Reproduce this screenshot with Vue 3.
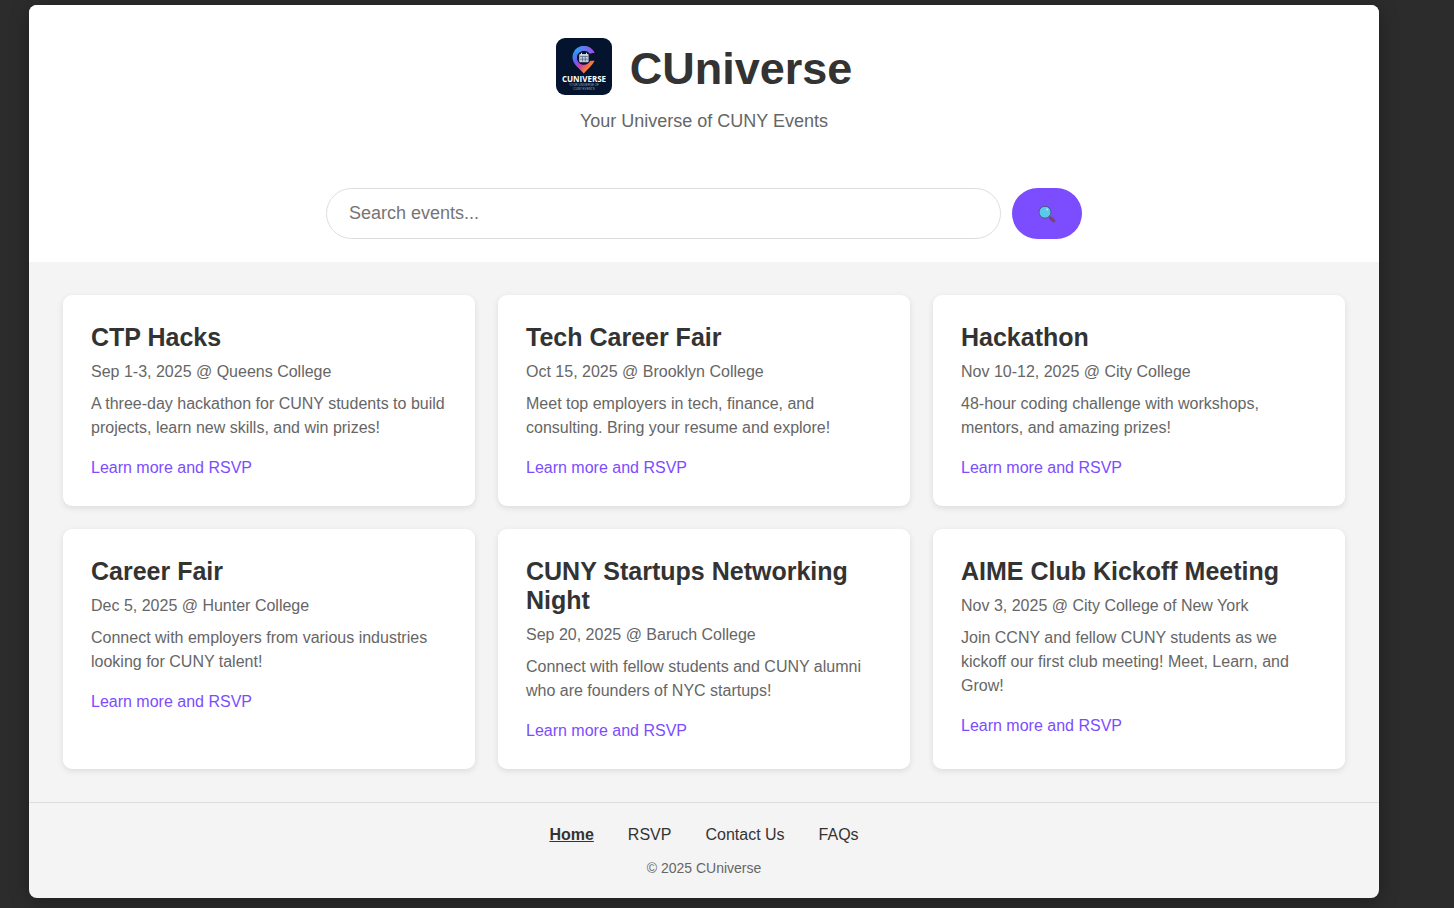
<template>
  <div class="page">
    <header class="header">
      <div class="brand">
        <svg class="logo" viewBox="0 0 56 57" role="img" aria-label="CUniverse logo">
          <defs>
            <linearGradient id="pin-fill" x1="0.1" y1="0.1" x2="0.8" y2="0.9">
              <stop offset="0" stop-color="#1fa4f5" />
              <stop offset="0.35" stop-color="#6a5cf0" />
              <stop offset="0.6" stop-color="#c93fae" />
              <stop offset="0.85" stop-color="#ff7a2e" />
            </linearGradient>
            <linearGradient id="pin-top" x1="0" y1="0" x2="1" y2="0">
              <stop offset="0" stop-color="#25a5f7" />
              <stop offset="1" stop-color="#a24be0" />
            </linearGradient>
          </defs>
          <rect width="56" height="57" fill="#04142f" />
          <path
            d="M38.5 14.5 C36 10.5 32.5 8 28 8 C21.5 8 16.5 13 16.5 19.5 C16.5 26 23 30 27.8 35.5 C31.5 31.2 36.5 27.5 38.7 22.8 L34.2 22.8 C32.9 25.3 30.7 26.8 28 26.8 C24 26.8 21 23.6 21 19.7 C21 15.8 24 12.7 28 12.7 C30.3 12.7 32.2 13.4 33.7 15.5 Z"
            fill="url(#pin-fill)"
          />
          <path
            d="M18.5 13 C20.5 9.8 24 8 28 8 C32.5 8 36.5 10.5 38.5 14.8 L33.7 15.5 C32.2 13.4 30.3 12.7 28 12.7 C25.5 12.7 23.5 13.7 22.2 15.5 Z"
            fill="url(#pin-top)"
          />
          <rect x="23.2" y="16" width="9.4" height="8.2" rx="1" fill="#c3cbd9" />
          <path d="M25.5 14.8 V17 M30.5 14.8 V17" stroke="#dfe5ef" stroke-width="1" />
          <path
            d="M24.2 18.5 H31.8 M24.2 21.2 H31.8 M26.5 18.5 V23.4 M29.3 18.5 V23.4"
            stroke="#53627c"
            stroke-width="0.7"
          />
          <text x="28" y="43.5" class="logo-name">CUNIVERSE</text>
          <text x="28" y="48.3" class="logo-tag">YOUR UNIVERSE OF</text>
          <text x="28" y="51.8" class="logo-tag">CUNY EVENTS</text>
        </svg>
        <h1>CUniverse</h1>
      </div>
      <p class="tagline">Your Universe of CUNY Events</p>

      <form class="search" @submit.prevent>
        <input v-model="query" type="text" placeholder="Search events..." aria-label="Search events" />
        <button type="submit" aria-label="Search">
          <svg viewBox="0 0 18 18" aria-hidden="true">
            <path d="M11 11 L12.8 13" stroke="#4b4a70" stroke-width="1.4" />
            <path d="M13 13.4 L15.6 15.8" stroke="#7d4470" stroke-width="3.6" stroke-linecap="round" />
            <circle cx="7" cy="7.2" r="6" fill="#5bc8ea" stroke="#4d5482" stroke-width="1" />
            <circle cx="9.2" cy="4.4" r="1" fill="#b9ecfa" />
          </svg>
        </button>
      </form>
    </header>

    <main class="events">
      <article v-for="event in filteredEvents" :key="event.title" class="card">
        <h2>{{ event.title }}</h2>
        <p class="meta">{{ event.date }} @ {{ event.location }}</p>
        <p class="description">{{ event.description }}</p>
        <a href="#rsvp">Learn more and RSVP</a>
      </article>
    </main>

    <footer class="footer">
      <nav>
        <a href="#home" class="active">Home</a>
        <a href="#rsvp">RSVP</a>
        <a href="#contact">Contact Us</a>
        <a href="#faqs">FAQs</a>
      </nav>
      <p>© 2025 CUniverse</p>
    </footer>
  </div>
</template>

<script setup>
import { ref, computed } from 'vue';

const query = ref('');

const events = [
  {
    title: 'CTP Hacks',
    date: 'Sep 1-3, 2025',
    location: 'Queens College',
    description: 'A three-day hackathon for CUNY students to build projects, learn new skills, and win prizes!'
  },
  {
    title: 'Tech Career Fair',
    date: 'Oct 15, 2025',
    location: 'Brooklyn College',
    description: 'Meet top employers in tech, finance, and consulting. Bring your resume and explore!'
  },
  {
    title: 'Hackathon',
    date: 'Nov 10-12, 2025',
    location: 'City College',
    description: '48-hour coding challenge with workshops, mentors, and amazing prizes!'
  },
  {
    title: 'Career Fair',
    date: 'Dec 5, 2025',
    location: 'Hunter College',
    description: 'Connect with employers from various industries looking for CUNY talent!'
  },
  {
    title: 'CUNY Startups Networking Night',
    date: 'Sep 20, 2025',
    location: 'Baruch College',
    description: 'Connect with fellow students and CUNY alumni who are founders of NYC startups!'
  },
  {
    title: 'AIME Club Kickoff Meeting',
    date: 'Nov 3, 2025',
    location: 'City College of New York',
    description: 'Join CCNY and fellow CUNY students as we kickoff our first club meeting! Meet, Learn, and Grow!'
  }
];

const filteredEvents = computed(() => {
  const term = query.value.trim().toLowerCase();
  return events.filter((event) => event.title.toLowerCase().includes(term));
});
</script>

<style>
body {
  background: #2c2c2c;
  padding: 5px 75px 10px 29px;
  font-family: Arial, 'Liberation Sans', sans-serif;
}
</style>

<style scoped>
.page {
  background: #f4f4f4;
  color: #333;
  border-radius: 8px;
  overflow: hidden;
  box-shadow: 0 4px 20px rgba(0, 0, 0, 0.3);
}

h1,
h2,
p {
  margin: 0;
}

/* Header */
.header {
  display: flex;
  flex-direction: column;
  align-items: center;
  padding: 33px 34px 23px;
  background: #fff;
}

.brand {
  display: flex;
  align-items: flex-start;
  gap: 18px;
}

.logo {
  width: 56px;
  height: 57px;
  border-radius: 9px;
}

.logo-name {
  fill: #fff;
  font-family: 'Open Sans', sans-serif;
  font-size: 8px;
  font-weight: 700;
  text-anchor: middle;
}

.logo-tag {
  fill: #9aa5b8;
  font-size: 3px;
  text-anchor: middle;
}

h1 {
  font-size: 45px;
  line-height: 61px;
}

.tagline {
  margin-top: 10px;
  color: #666;
  font-size: 18px;
  line-height: 24px;
}

/* Search */
.search {
  display: flex;
  gap: 11px;
  width: 100%;
  max-width: 756px;
  margin-top: 55px;
}

.search input {
  flex: 1;
  min-width: 0;
  box-sizing: border-box;
  height: 51px;
  padding: 0 22px;
  border: 1px solid #ddd;
  border-radius: 28px;
  background: #fff;
  color: #333;
  font-family: inherit;
  font-size: 18px;
}

.search input::placeholder {
  color: #757575;
}

.search button {
  display: flex;
  align-items: center;
  justify-content: center;
  width: 70px;
  height: 51px;
  padding: 0;
  border: none;
  border-radius: 28px;
  background: #7c4dff;
  cursor: pointer;
}

.search svg {
  width: 18px;
  height: 18px;
}

/* Event cards */
.events {
  display: grid;
  grid-template-columns: repeat(auto-fill, minmax(340px, 1fr));
  gap: 23px;
  padding: 33px 34px;
}

.card {
  padding: 28px 28px 26px;
  border-radius: 9px;
  background: #fff;
  box-shadow: 0 2px 6px rgba(0, 0, 0, 0.1);
  font-size: 16px;
  line-height: 24px;
}

.card h2 {
  font-size: 25px;
  line-height: 29px;
}

.meta,
.description {
  margin-top: 8px;
  color: #666;
}

.card a {
  display: inline-block;
  margin-top: 16px;
  color: #7c4dff;
  text-decoration: none;
}

/* Footer */
.footer {
  padding: 20px 34px;
  border-top: 1px solid #ddd;
  text-align: center;
}

.footer nav {
  display: flex;
  flex-wrap: wrap;
  justify-content: center;
  gap: 34px;
  font-size: 16px;
  line-height: 24px;
}

.footer nav a {
  color: #333;
  text-decoration: none;
}

.footer nav .active {
  font-weight: bold;
  text-decoration: underline;
}

.footer p {
  margin-top: 11px;
  color: #666;
  font-size: 14px;
  line-height: 20px;
}
</style>
